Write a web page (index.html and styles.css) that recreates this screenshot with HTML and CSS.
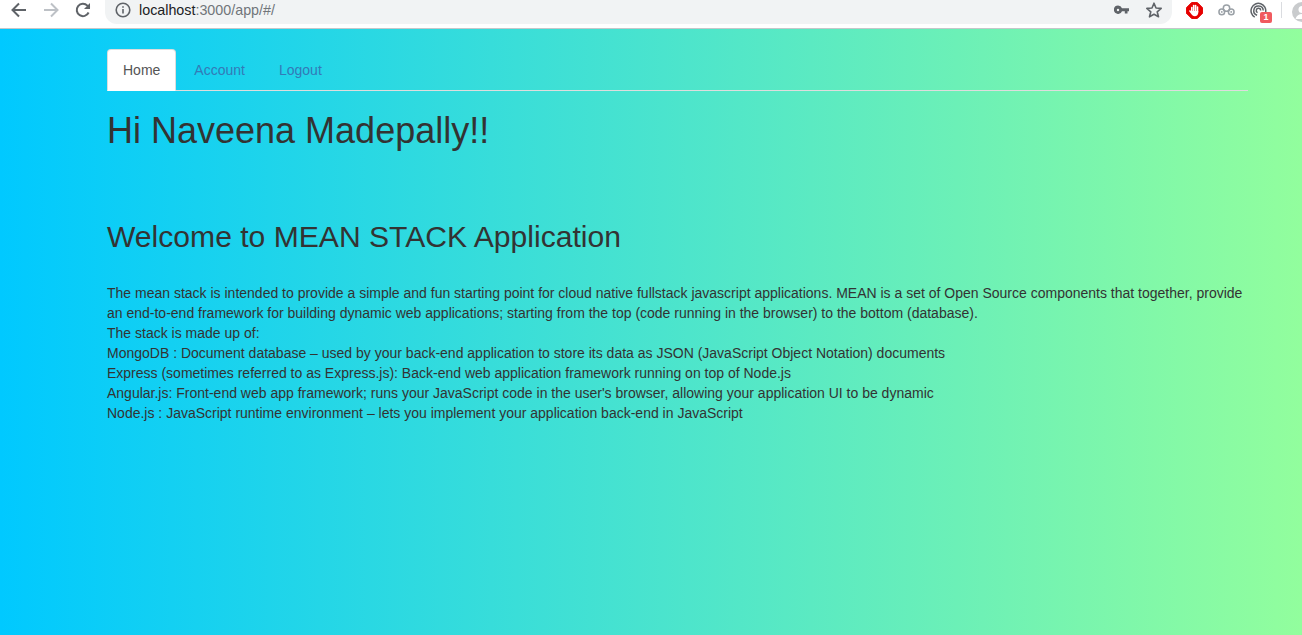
FILE: index.html
```html
<!DOCTYPE html>
<html>
<head>
    <title>MEAN Stack</title>
    <link rel="stylesheet" href="styles.css">
</head>
<body>
    <div class="toolbar">
        <div class="nav-icons">
            <svg class="tool-icon" viewBox="0 0 18 18"><path d="M16 9H3M9 2.5 2.5 9 9 15.5" fill="none" stroke="#5f6368" stroke-width="2"/></svg>
            <svg class="tool-icon" viewBox="0 0 18 18"><path d="M2 9h13M9 2.5 15.5 9 9 15.5" fill="none" stroke="#bdc1c6" stroke-width="2"/></svg>
            <svg class="tool-icon" viewBox="0 0 18 18"><path d="M14.6 11.5A6.2 6.2 0 1 1 13.4 4.6L15.5 6.7" fill="none" stroke="#5f6368" stroke-width="2"/><path d="M16 2v6h-6z" fill="#5f6368"/></svg>
        </div>
        <div class="omnibox">
            <svg class="info-icon" viewBox="0 0 16 16"><circle cx="8" cy="8" r="6.8" fill="none" stroke="#5f6368" stroke-width="1.6"/><path d="M7.2 7h1.6v4.6H7.2zM7.2 4.2h1.6v1.6H7.2z" fill="#5f6368"/></svg>
            <span class="url"><span class="url-host">localhost</span>:3000/app/#/</span>
            <svg class="key-icon" viewBox="0 0 15 10"><path fill-rule="evenodd" d="M4 .5A4.200 4.200 0 0 1 8 3.200h7v3H13.500V8.500h-2.700V6.200H8A4.200 4.200 0 1 1 4 .5zm0 3.300a1.200 1.200 0 1 0 0 2.400 1.200 1.200 0 0 0 0-2.400z" fill="#5f6368"/></svg>
            <svg class="star-icon" viewBox="0 0 18 18"><path d="M9 2.200 11 7l5.200.4-4 3.400 1.300 5L9 13.200l-4.500 2.600 1.300-5-4-3.400L7 7z" fill="none" stroke="#5f6368" stroke-width="1.600" stroke-linejoin="round"/></svg>
        </div>
        <div class="extensions">
            <svg class="ext-icon" viewBox="0 0 18 18">
                <path d="M6 .5h6L17.500 6v6L12 17.500H6L.5 12V6z" fill="#e60000" stroke="#e60000" stroke-linejoin="round"/>
                <g fill="#fff">
                    <rect x="5.300" y="5" width="1.700" height="6" rx=".8"/>
                    <rect x="7.300" y="3" width="1.700" height="7" rx=".8"/>
                    <rect x="9.300" y="3" width="1.700" height="7" rx=".8"/>
                    <rect x="11.300" y="4.500" width="1.700" height="7" rx=".8"/>
                    <path d="M5.300 9.500h7.700v1.500c0 2.500-1.500 4-3.800 4-1.700 0-2.700-.8-3.400-2L3.500 10c-.5-.9.600-1.600 1.300-.9z"/>
                </g>
            </svg>
            <svg class="ext-icon" viewBox="0 0 18 18"><g fill="none" stroke="#9aa0a6" stroke-width="1.600"><circle cx="9" cy="6.500" r="3.400"/><circle cx="4" cy="10.500" r="3"/><circle cx="14" cy="10.500" r="3"/></g><circle cx="4" cy="10.500" r="1" fill="#9aa0a6"/><circle cx="14" cy="10.500" r="1" fill="#9aa0a6"/></svg>
            <div class="ext-badged">
                <svg class="ext-icon" viewBox="0 0 18 18"><g fill="none" stroke="#5f6368" stroke-width="1.600"><path d="M5 16A7.800 7.800 0 1 1 16.500 11"/><path d="M7.500 14A5 5 0 1 1 14 9"/><path d="M8 11.300A2.400 2.400 0 1 1 11.400 9"/></g></svg>
                <span class="badge">1</span>
            </div>
            <span class="toolbar-divider"></span>
            <span class="avatar">
                <svg class="avatar-person" viewBox="0 0 20 20"><circle cx="10" cy="7.500" r="3.500" fill="#fff"/><path d="M3.500 17c1-3.500 3.500-5 6.500-5s5.500 1.500 6.500 5z" fill="#fff"/></svg>
            </span>
        </div>
    </div>

    <div class="page">
        <ul class="tabs">
            <li class="tab active">Home</li>
            <li class="tab">Account</li>
            <li class="tab">Logout</li>
        </ul>

        <h1>Hi Naveena Madepally!!</h1>
        <h2>Welcome to MEAN STACK Application</h2>

        <p class="intro">
            The mean stack is intended to provide a simple and fun starting point for cloud native fullstack javascript applications. MEAN is a set of Open Source components that together, provide an end-to-end framework for building dynamic web applications; starting from the top (code running in the browser) to the bottom (database).<br>
            The stack is made up of:<br>
            MongoDB : Document database – used by your back-end application to store its data as JSON (JavaScript Object Notation) documents<br>
            Express (sometimes referred to as Express.js): Back-end web application framework running on top of Node.js<br>
            Angular.js: Front-end web app framework; runs your JavaScript code in the user's browser, allowing your application UI to be dynamic<br>
            Node.js : JavaScript runtime environment – lets you implement your application back-end in JavaScript
        </p>
    </div>
</body>
</html>
```

FILE: styles.css
```css
* {
    box-sizing: border-box;
}

html, body {
    height: 100%;
}

body {
    margin: 0;
    display: flex;
    flex-direction: column;
    overflow: hidden;
    font-family: "Liberation Sans", Arial, sans-serif;
    font-size: 14px;
    line-height: 20px;
    color: #333;
}

/* browser bar */
.toolbar {
    height: 29px;
    flex: none;
    display: flex;
    align-items: flex-start;
    overflow: hidden;
    background: #fff;
    border-bottom: 1px solid #c4c7c9;
}

.nav-icons {
    flex: none;
    display: flex;
    gap: 14px;
    padding: 1px 0 0 10px;
    width: 105px;
}

.tool-icon {
    width: 18px;
    height: 18px;
}

.omnibox {
    flex: none;
    width: 1067px;
    height: 24px;
    display: flex;
    align-items: center;
    padding: 0 9px 4px 10px;
    background: #f1f3f4;
    border-radius: 0 0 12px 12px;
}

.info-icon {
    width: 16px;
    height: 16px;
    margin-right: 8px;
}

.url {
    flex: 1;
    font-size: 14.3px;
    color: #70757a;
}

.url-host {
    color: #202124;
}

.key-icon {
    width: 15px;
    height: 10px;
    margin-right: 16px;
}

.star-icon {
    width: 18px;
    height: 18px;
}

.extensions {
    flex: none;
    display: flex;
    gap: 15px;
    padding: 2px 0 0 14px;
}

.ext-icon {
    width: 17px;
    height: 17px;
    display: block;
}

.ext-badged {
    position: relative;
}

.badge {
    position: absolute;
    left: 10px;
    top: 10px;
    width: 12px;
    height: 11px;
    background: #f05a5f;
    border-radius: 2px;
    color: #fff;
    font-size: 9px;
    font-weight: bold;
    line-height: 11px;
    text-align: center;
}

.toolbar-divider {
    width: 1px;
    height: 16px;
    margin-left: -1px;
    background: #dadce0;
}

.avatar {
    width: 20px;
    height: 20px;
    margin-left: -5px;
    border-radius: 50%;
    background: #c9cbcd;
    overflow: hidden;
}

.avatar-person {
    display: block;
    width: 20px;
    height: 20px;
}

/* page */
.page {
    flex: 1;
    padding: 20px 54px 0 107px;
    background: linear-gradient(to right, #00c9ff, #92fe9d);
}

.tabs {
    display: flex;
    margin: 0;
    padding: 0;
    list-style: none;
    border-bottom: 1px solid #ddd;
}

.tab {
    padding: 10px 15px;
    margin-right: 2px;
    margin-bottom: -1px;
    border: 1px solid transparent;
    border-radius: 4px 4px 0 0;
    color: #337ab7;
}

.tab.active {
    background: #fff;
    border-color: #ddd #ddd transparent;
    color: #555;
}

h1 {
    margin: 20px 0 10px;
    font-size: 36px;
    font-weight: 500;
    line-height: 40px;
}

h2 {
    margin: 69px 0 10px;
    font-size: 30.1px;
    font-weight: 500;
    line-height: 33px;
}

.intro {
    margin: 30px 0 0;
}
```
